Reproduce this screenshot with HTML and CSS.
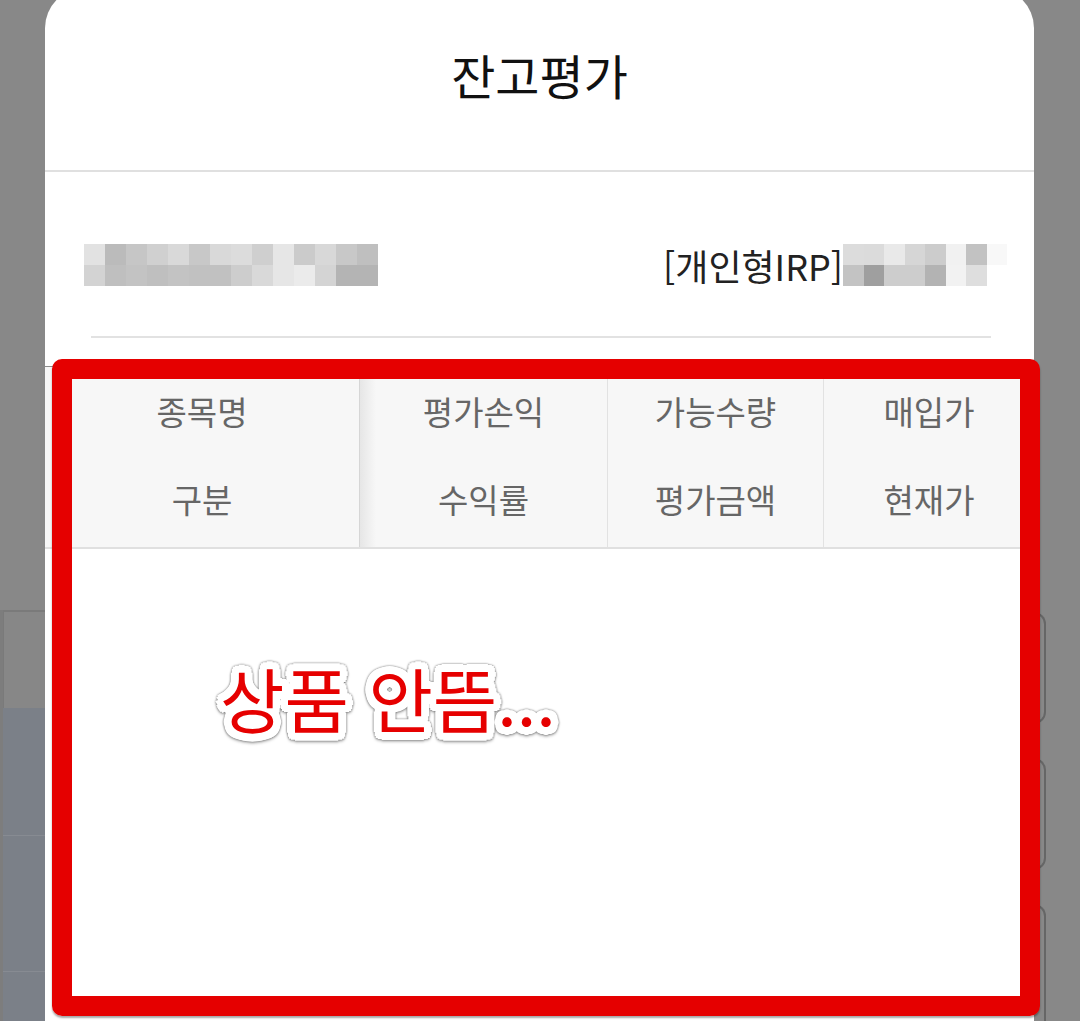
FILE: index.html
```html
<!DOCTYPE html>
<html lang="ko">
<head>
  <meta charset="UTF-8">
  <title>잔고평가</title>
  <meta name="viewport" content="width=device-width, initial-scale=1.0">
  <link rel="stylesheet" href="styles.css">
</head>
<body>
  <div class="screen">
    <div class="bg-left">
      <div class="bg-gap"></div>
      <div class="bg-lower">
        <div class="bg-tab"></div>
        <div class="bg-list">
          <div class="bg-row"></div>
          <div class="bg-row"></div>
        </div>
      </div>
    </div>

    <div class="sheet">
      <div class="sheet-head">
        <h1>잔고평가</h1>
      </div>

      <div class="account">
        <div class="blur blur-name">
          <div class="blur-a"></div>
          <div class="blur-b"></div>
        </div>
        <div class="acct-right">
          <span class="acct-type">[개인형IRP]</span>
          <div class="blur blur-no">
            <div class="blur-a"></div>
            <div class="blur-b"></div>
          </div>
        </div>
      </div>
      <div class="divider"></div>

      <div class="grid">
        <div class="grid-head">
          <div class="col col-fixed"><span>종목명</span><span>구분</span></div>
          <div class="col col-shade"><span>평가손익</span><span>수익률</span></div>
          <div class="col"><span>가능수량</span><span>평가금액</span></div>
          <div class="col col-last"><span>매입가</span><span>현재가</span></div>
        </div>
        <div class="grid-body">
          <p class="note" data-text="상품 안뜸...">상품 안뜸...</p>
        </div>
      </div>
    </div>

    <div class="bg-right">
      <div class="ghost-btn"></div>
      <div class="ghost-btn"></div>
      <div class="ghost-btn"></div>
    </div>

    <div class="mark"></div>
  </div>
</body>
</html>
```

FILE: styles.css
```css
html, body {
  margin: 0;
  padding: 0;
  background: #888;
  font-family: "Noto Sans CJK KR", "Noto Sans", sans-serif;
}

.screen {
  position: relative;
  display: flex;
  height: 1021px;
  overflow: hidden;
  background: #888;
}

/* page behind the dim overlay */
.bg-left {
  width: 45px;
  flex: none;
  display: flex;
  flex-direction: column;
}

.bg-gap {
  height: 610px;
  flex: none;
}

.bg-lower {
  flex: 1;
  display: flex;
  flex-direction: column;
  padding-left: 3px;
  background: #7d7d7d;
}

.bg-tab {
  height: 98px;
  flex: none;
  box-sizing: border-box;
  border-top: 2px solid #7a7a7a;
  border-left: 1px solid #7a7a7a;
  background: #878787;
}

.bg-list {
  flex: 1;
  padding-top: 127px;
  background: #7b8088;
}

.bg-row {
  height: 135px;
  border-top: 1px solid #878b92;
}

.bg-right {
  width: 46px;
  flex: none;
  display: flex;
  flex-direction: column;
  gap: 34px;
  padding-top: 612px;
}

.ghost-btn {
  width: 10px;
  height: 108px;
  flex: none;
  border: 2px solid #666;
  border-left: 0;
  border-radius: 0 12px 12px 0;
}

.ghost-btn:last-child {
  height: 160px;
}

/* bottom sheet */
.sheet {
  width: 989px;
  flex: none;
  margin-top: -12px;
  height: 1040px;
  background: #fff;
  border-radius: 40px 40px 0 0;
}

.sheet-head {
  height: 172px;
  padding-bottom: 10px;
  display: flex;
  align-items: center;
  justify-content: center;
  border-bottom: 2px solid #e0e0e0;
}

.sheet-head h1 {
  margin: 0;
  font-size: 48px;
  font-weight: 400;
  color: #111;
}

.account {
  display: flex;
  justify-content: space-between;
  align-items: center;
  padding: 72px 27px 50px 39px;
}

.acct-right {
  display: flex;
  align-items: center;
}

.acct-type {
  font-size: 36px;
  line-height: 42px;
  color: #222;
}

.blur-a,
.blur-b {
  height: 21px;
}

.blur-name {
  width: 294px;
}

.blur-name .blur-a {
  background: linear-gradient(to right,
    #e2e2e2 0 21px, #bbbbbb 21px 42px, #c6c6c6 42px 63px, #d0d0d0 63px 84px,
    #d9d9d9 84px 105px, #c8c8c8 105px 126px, #d9d9d9 126px 147px, #dcdcdc 147px 168px,
    #cfcfcf 168px 189px, #e6e6e6 189px 210px, #cbcbcb 210px 231px, #d8d8d8 231px 252px,
    #c8c8c8 252px 273px, #bfbfbf 273px 294px);
}

.blur-name .blur-b {
  background: linear-gradient(to right,
    #d3d3d3 0 21px, #bfbfbf 21px 42px, #c3c3c3 42px 63px, #bfbfbf 63px 84px,
    #c3c3c3 84px 105px, #c1c1c1 105px 126px, #c1c1c1 126px 147px, #cdcdcd 147px 168px,
    #d9d9d9 168px 189px, #e6e6e6 189px 210px, #ebebeb 210px 231px, #d4d4d4 231px 252px,
    #b4b4b4 252px 273px, #b4b4b4 273px 294px);
}

.blur-no {
  width: 164px;
}

.blur-no .blur-a {
  background: linear-gradient(to right,
    #dcdcdc 0 20.5px, #dbdbdb 20.5px 41px, #e9e9e9 41px 61.5px, #d6d6d6 61.5px 82px,
    #cccccc 82px 102.5px, #f1f1f1 102.5px 123px, #c2c2c2 123px 143.5px, #f8f8f8 143.5px 164px);
}

.blur-no .blur-b {
  background: linear-gradient(to right,
    #c3c3c3 0 20.5px, #9f9f9f 20.5px 41px, #cdcdcd 41px 61.5px, #cdcdcd 61.5px 82px,
    #b3b3b3 82px 102.5px, #f2f2f2 102.5px 123px, #dedede 123px 143.5px, #fff 143.5px 164px);
}

.divider {
  border-top: 2px solid #e2e2e2;
  margin: 0 43px 0 46px;
}

/* holdings table */
.grid {
  margin-top: 28px;
}

.grid-head {
  display: grid;
  grid-template-columns: 315px 248px 216px 1fr;
  border-top: 1px solid #8c8c8c;
  border-bottom: 2px solid #e0e0e0;
  background: #f7f7f7;
}

.col {
  display: grid;
  grid-template-rows: 88px 88px;
  padding-bottom: 4px;
  align-items: center;
  justify-items: center;
  border-right: 1px solid #e2e2e2;
  font-size: 33px;
  color: #666;
}

.col-fixed {
  border-right-color: #d6d6d6;
}

.col-shade {
  background: linear-gradient(to right, #e6e6e6, #f7f7f7 16px);
}

.col-last {
  border-right: 0;
}

.grid-body {
  padding: 114px 0 0 175px;
}

.note {
  position: relative;
  isolation: isolate;
  display: inline-block;
  margin: 0;
  font-size: 70px;
  line-height: 70px;
  font-weight: 400;
  color: #e60000;
}

/* white sticker outline behind the red text */
.note::before {
  content: attr(data-text);
  position: absolute;
  left: 0;
  top: 0;
  z-index: -1;
  color: #fff;
  text-shadow:
    8px 0 0 #fff, -8px 0 0 #fff, 0 8px 0 #fff, 0 -8px 0 #fff,
    7px 4px 0 #fff, -7px 4px 0 #fff, 7px -4px 0 #fff, -7px -4px 0 #fff,
    4px 7px 0 #fff, -4px 7px 0 #fff, 4px -7px 0 #fff, -4px -7px 0 #fff,
    6px 6px 0 #fff, -6px 6px 0 #fff, 6px -6px 0 #fff, -6px -6px 0 #fff,
    4px 0 0 #fff, -4px 0 0 #fff, 0 4px 0 #fff, 0 -4px 0 #fff,
    3px 3px 0 #fff, -3px 3px 0 #fff, 3px -3px 0 #fff, -3px -3px 0 #fff;
  filter: drop-shadow(0 0 1px rgba(0, 0, 0, 0.55)) drop-shadow(0 2px 1px rgba(0, 0, 0, 0.2));
}

/* red annotation frame */
.mark {
  position: absolute;
  left: 52px;
  top: 359px;
  width: 988px;
  height: 657px;
  box-sizing: border-box;
  border: 20px solid #e50000;
  border-radius: 10px;
  box-shadow: 0 2px 2px rgba(0, 0, 0, 0.35);
  pointer-events: none;
}
```
